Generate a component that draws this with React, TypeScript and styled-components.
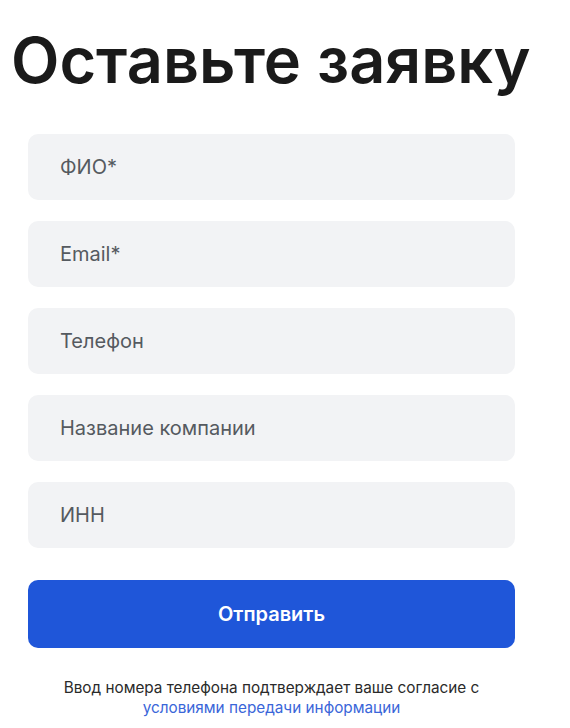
import React from 'react'
import styled, { createGlobalStyle } from 'styled-components'

const GlobalStyle = createGlobalStyle`
  * {
    box-sizing: border-box;
  }
  body {
    margin: 0;
    background: #fff;
    font-family: Inter, 'Noto Sans', sans-serif;
  }
`

const Page = styled.div`
  padding: 14px 0 0 0;
`

const Title = styled.h1`
  margin: 0 0 0 11px;
  font-size: 63px;
  line-height: 92px;
  font-weight: 600;
  color: #1a1a1a;
`

const Form = styled.form`
  width: 487px;
  margin: 28px 0 0 28px;
  display: flex;
  flex-direction: column;
  gap: 21px;
`

const Field = styled.input`
  height: 66px;
  border: none;
  border-radius: 10px;
  background: #f2f3f5;
  padding: 0 32px;
  font-family: inherit;
  font-size: 20px;
  color: #222;
  outline: none;

  &::placeholder {
    color: #555a60;
  }
`

const SubmitButton = styled.button`
  height: 68px;
  margin-top: 11px;
  border: none;
  border-radius: 10px;
  background: #1f56d9;
  color: #fff;
  font-family: inherit;
  font-size: 20px;
  font-weight: 600;
  cursor: pointer;
`

const Note = styled.p`
  margin: 9px 0 0;
  text-align: center;
  font-size: 15.3px;
  line-height: 20px;
  color: #2a2a2a;
`

const NoteLink = styled.a`
  color: #3a66d9;
  text-decoration: none;
`

const fields = ['ФИО*', 'Email*', 'Телефон', 'Название компании', 'ИНН']

const App = () => {
  return (
    <>
      <GlobalStyle />
      <Page>
        <Title>Оставьте заявку</Title>
        <Form onSubmit={(e) => e.preventDefault()}>
          {fields.map((label) => (
            <Field key={label} placeholder={label} />
          ))}
          <SubmitButton type='submit'>Отправить</SubmitButton>
          <Note>
            Ввод номера телефона подтверждает ваше согласие с
            <br />
            <NoteLink href='#'>условиями передачи информации</NoteLink>
          </Note>
        </Form>
      </Page>
    </>
  )
}

export default App
